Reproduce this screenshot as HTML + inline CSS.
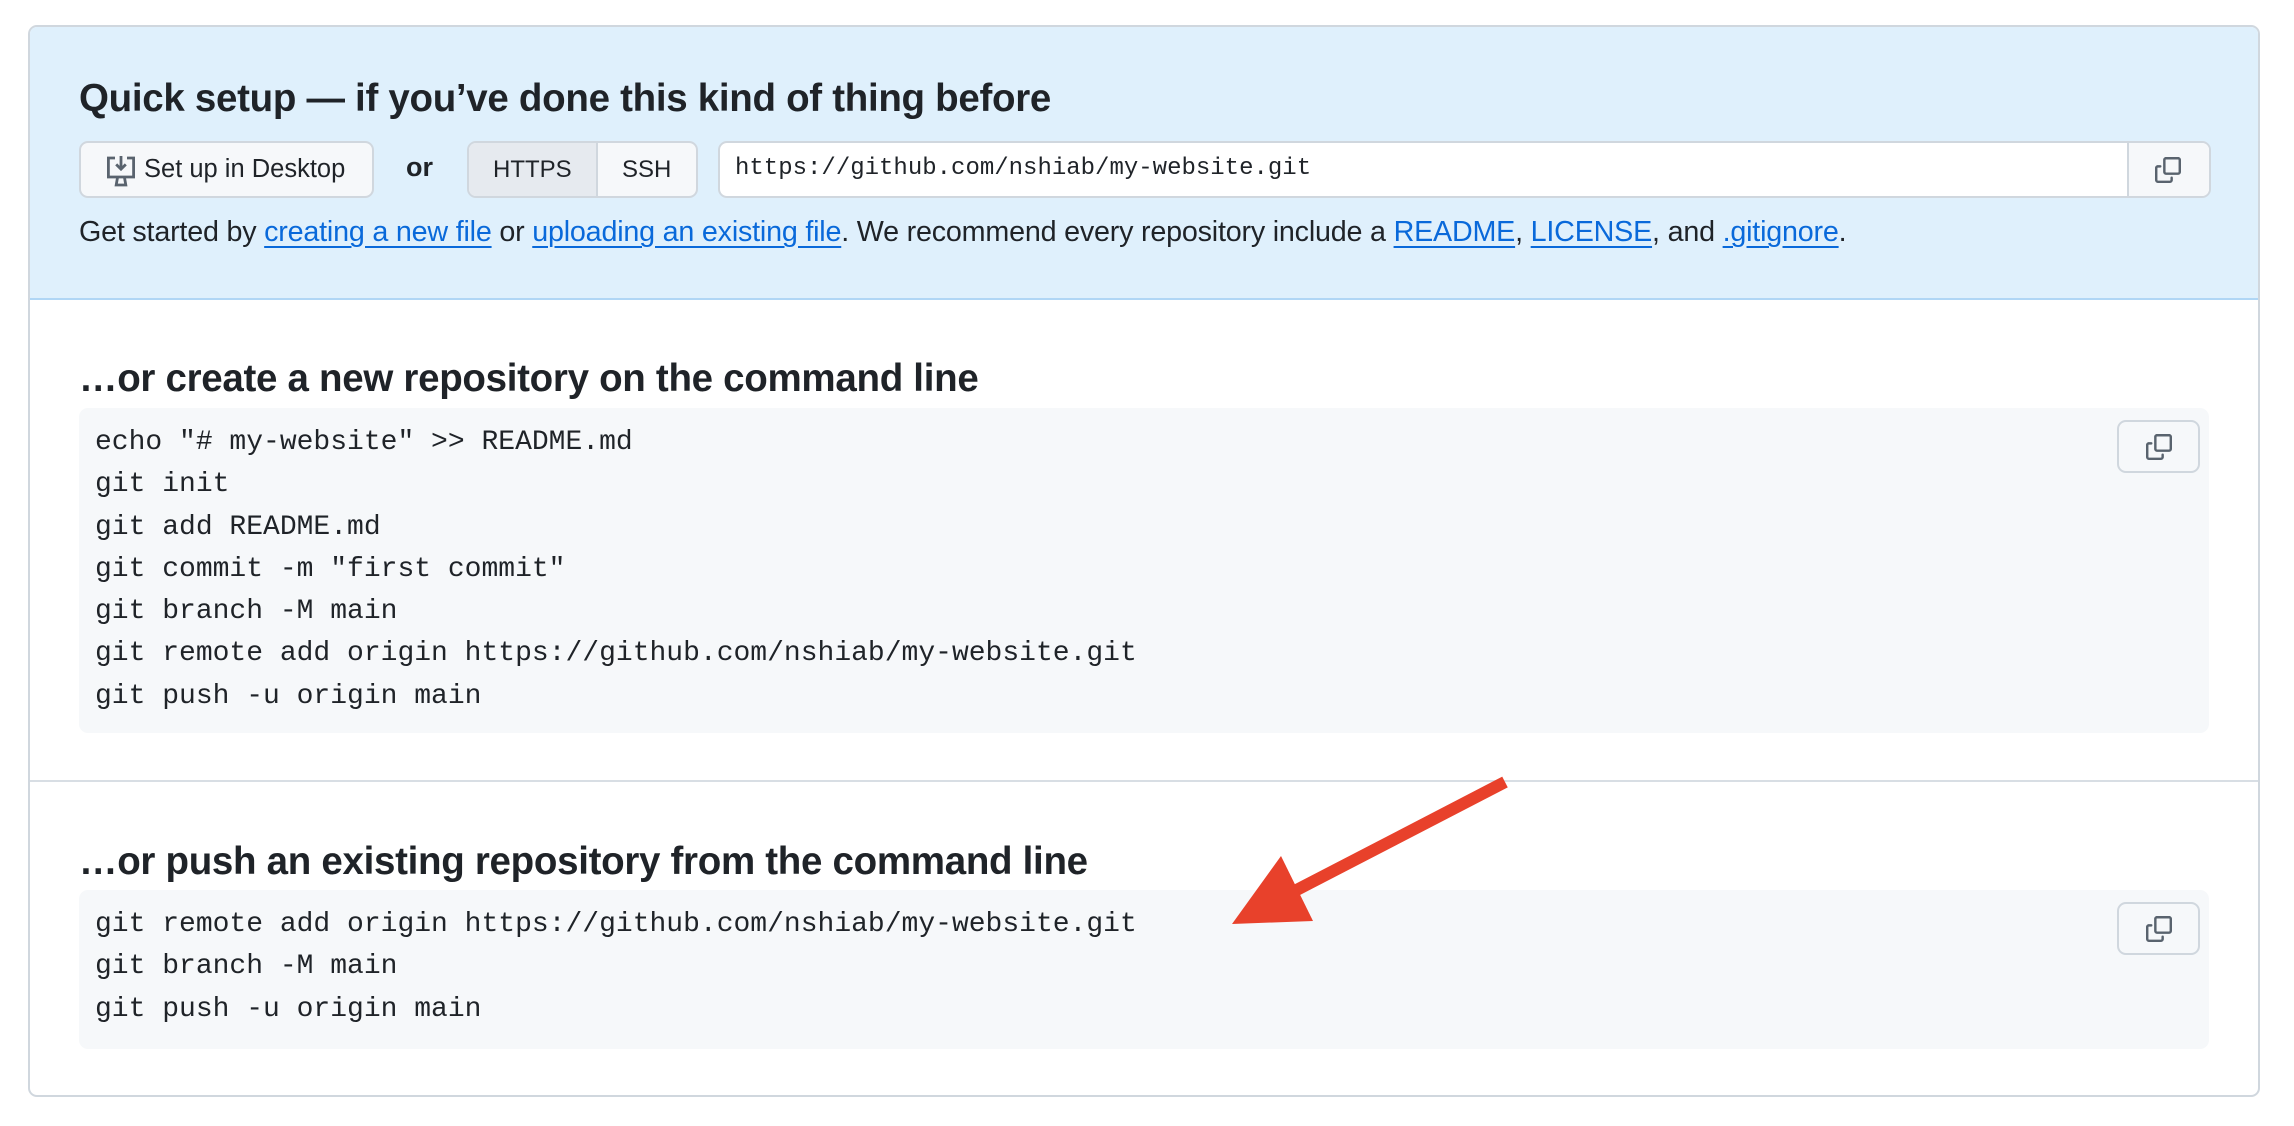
<!DOCTYPE html>
<html><head><meta charset="utf-8"><style>
*{box-sizing:border-box;margin:0;padding:0}
body{width:2294px;height:1126px;background:#fff;position:relative;overflow:hidden;font-family:"Liberation Sans",sans-serif;color:#1f2328}
.abs{position:absolute}
.box{left:28px;top:25px;width:2232px;height:1072px;border:2px solid #d0d7de;border-radius:9px;overflow:hidden}
.hdr{left:0;top:0;width:100%;height:273px;background:#dff0fc;border-bottom:2px solid #b0d6f5}
h2{position:absolute;font-size:38.5px;font-weight:700;white-space:nowrap;letter-spacing:-0.3px}
h3{position:absolute;font-size:38.5px;font-weight:700;white-space:nowrap;letter-spacing:-0.3px}
.btn{position:absolute;background:#f6f8fa;border:2px solid #d0d7de;border-radius:9px}
.mono{font-family:"Liberation Mono",monospace}
.code{position:absolute;left:49px;width:2130px;background:#f6f8fa;border-radius:9px}
.code pre{position:absolute;left:16px;font-family:"Liberation Mono",monospace;font-size:28px;line-height:42.3px;color:#1f2328}
a{color:#0969da;text-decoration:underline;text-underline-offset:5px;text-decoration-thickness:2px}
.cp{position:absolute;width:83px;height:53px;background:#f6f8fa;border:2px solid #d0d7de;border-radius:9px;display:flex;align-items:center;justify-content:center}
</style></head><body>
<svg width="0" height="0" style="position:absolute"><defs><symbol id="copy" viewBox="0 0 16 16"><path fill="#59636e" d="M0 6.75C0 5.784.784 5 1.75 5h1.5a.75.75 0 0 1 0 1.5h-1.5a.25.25 0 0 0-.25.25v7.5c0 .138.112.25.25.25h7.5a.25.25 0 0 0 .25-.25v-1.5a.75.75 0 0 1 1.5 0v1.5A1.75 1.75 0 0 1 9.25 16h-7.5A1.75 1.75 0 0 1 0 14.25Z M5 1.75C5 .784 5.784 0 6.75 0h7.5C15.216 0 16 .784 16 1.75v7.5A1.75 1.75 0 0 1 14.25 11h-7.5A1.75 1.75 0 0 1 5 9.25Zm1.75-.25a.25.25 0 0 0-.25.25v7.5c0 .138.112.25.25.25h7.5a.25.25 0 0 0 .25-.25v-7.5a.25.25 0 0 0-.25-.25Z"/></symbol></defs></svg>
<div class="abs box">
 <div class="abs hdr"></div>
 <h2 style="left:49px;top:50px">Quick setup — if you’ve done this kind of thing before</h2>
 <div class="btn" style="left:49px;top:114px;width:295px;height:57px">
  <svg class="abs" style="left:24px;top:11px" width="32" height="34" viewBox="0 0 16 17"><path fill="none" stroke="#59636e" stroke-width="1.4" d="M5 2H1.7v9.5h12.6V2H11M8 1v6.5M5.6 5.2 8 7.6l2.4-2.4M6.3 11.5 5.6 15.5h4.8l-.7-4"/></svg>
  <span class="abs" style="left:63px;top:12px;font-size:25.5px;white-space:nowrap">Set up in Desktop</span>
 </div>
 <span class="abs" style="left:376px;top:125px;font-size:27px;font-weight:700">or</span>
 <div class="btn" style="left:437px;top:114px;width:231px;height:57px;overflow:hidden">
  <div class="abs" style="left:0;top:0;width:129px;height:100%;background:#e6eaef;border-right:2px solid #d0d7de"></div>
  <span class="abs" style="left:24px;top:13px;font-size:24px">HTTPS</span>
  <span class="abs" style="left:153px;top:13px;font-size:24px">SSH</span>
 </div>
 <div class="abs" style="left:688px;top:114px;width:1493px;height:57px;background:#fff;border:2px solid #d0d7de;border-radius:9px;overflow:hidden">
  <span class="abs mono" style="left:15px;top:12px;font-size:24px;white-space:nowrap">https://github.com/nshiab/my-website.git</span>
  <div class="abs" style="right:0;top:0;width:82px;height:100%;background:#f6f8fa;border-left:2px solid #d0d7de"><svg class="abs" style="left:26px;top:14px" width="26" height="26"><use href="#copy"/></svg></div>
 </div>
 <div class="abs" style="left:49px;top:189px;font-size:28.7px;white-space:nowrap;letter-spacing:-0.2px">Get started by <a>creating a new file</a> or <a>uploading an existing file</a>. We recommend every repository include a <a>README</a>, <a>LICENSE</a>, and <a>.gitignore</a>.</div>

 <h3 style="left:49px;top:330px">…or create a new repository on the command line</h3>
 <div class="code" style="top:381px;height:325px">
  <pre style="top:14px">echo "# my-website" &gt;&gt; README.md
git init
git add README.md
git commit -m "first commit"
git branch -M main
git remote add origin https://github.com/nshiab/my-website.git
git push -u origin main</pre>
  <div class="cp" style="left:2038px;top:12px"><svg width="26" height="26"><use href="#copy"/></svg></div>
 </div>
 <div class="abs" style="left:0;top:753px;width:100%;height:2px;background:#d8dee4"></div>
 <h3 style="left:49px;top:813px">…or push an existing repository from the command line</h3>
 <div class="code" style="top:863px;height:159px">
  <pre style="top:14px">git remote add origin https://github.com/nshiab/my-website.git
git branch -M main
git push -u origin main</pre>
  <div class="cp" style="left:2038px;top:12px"><svg width="26" height="26"><use href="#copy"/></svg></div>
 </div>
</div>
<svg class="abs" style="left:0;top:0" width="2294" height="1126"><line x1="1505" y1="782" x2="1285" y2="896" stroke="#e8412b" stroke-width="12"/><polygon points="1281,856 1232,924 1313,921" fill="#e8412b"/></svg>
</body></html>
